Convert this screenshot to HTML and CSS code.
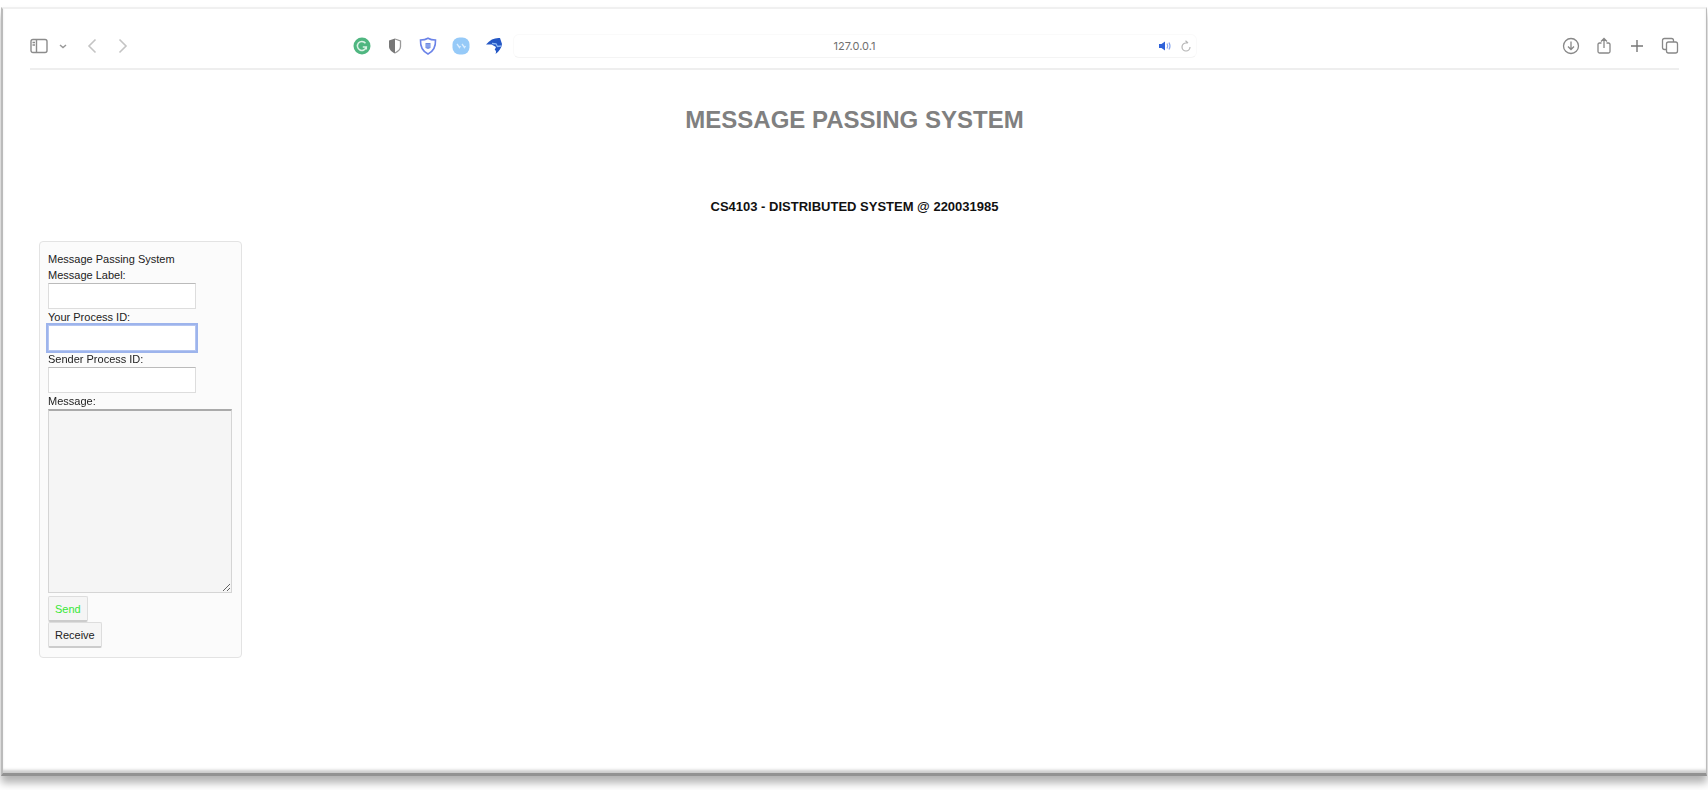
FILE: index.html
```html
<!DOCTYPE html>
<html lang="en">
<head>
    <meta charset="UTF-8">
    <meta name="viewport" content="width=device-width, initial-scale=1.0">
    <title>Message Passing System</title>
    <link rel="stylesheet" href="styles.css">
</head>
<body>
    <div class="window">
        <header class="toolbar">
            <div class="toolbar-left">
                <div class="tools nav-tools">
                    <button class="icon-btn" aria-label="Sidebar">
                        <svg width="18" height="18" viewBox="0 0 18 18" fill="none" stroke="#8c8c8c" stroke-width="1.4"><rect x="1" y="2.500" width="16" height="13" rx="2"/><path d="M6.500 2.500v13M2.500 5.500h2.500M2.500 8h2.500"/></svg>
                    </button>
                    <button class="icon-btn" aria-label="Tab groups">
                        <svg width="10" height="18" viewBox="0 0 10 18" fill="none" stroke="#999" stroke-width="1.500"><path d="M2 8l3 2.500L8 8"/></svg>
                    </button>
                    <button class="icon-btn back" aria-label="Back">
                        <svg width="12" height="18" viewBox="0 0 12 18" fill="none" stroke="#c4c4c4" stroke-width="1.600"><path d="M9.500 2.500L3 9l6.500 6.500"/></svg>
                    </button>
                    <button class="icon-btn forward" aria-label="Forward">
                        <svg width="12" height="18" viewBox="0 0 12 18" fill="none" stroke="#c4c4c4" stroke-width="1.600"><path d="M2.500 2.500L9 9l-6.500 6.500"/></svg>
                    </button>
                </div>
                <div class="tools extensions">
                    <button class="icon-btn" aria-label="Grammar">
                        <svg width="18" height="18" viewBox="0 0 18 18"><circle cx="9" cy="9" r="8.500" fill="#4fb680"/><path d="M12.500 6.200A4.500 4.500 0 1 0 13.300 10H9.800M13.300 9.500v3" fill="none" stroke="#d9f2e4" stroke-width="1.500"/></svg>
                    </button>
                    <button class="icon-btn" aria-label="Privacy">
                        <svg width="18" height="18" viewBox="0 0 18 18"><path d="M9 1.500L3 3.500v6c0 3.500 3 5.500 6 7z" fill="#777"/><path d="M9 2l5.500 2v5.500c0 3-2.500 5-5.500 6.500" fill="none" stroke="#999" stroke-width="1.300"/></svg>
                    </button>
                    <button class="icon-btn" aria-label="Shield">
                        <svg width="18" height="18" viewBox="0 0 18 18"><path d="M9 1.200c2.200 1.300 4.500 1.800 7.500 1.800.3 6-1.300 11-7.500 14C2.800 14 1.200 9 1.500 3 4.500 3 6.800 2.500 9 1.200z" fill="#fff" stroke="#6b83e8" stroke-width="1.600"/><path d="M6.500 6h5v5l-2.500 1-2.500-1z" fill="#6e8ce4"/><path d="M8 7v3.500M10 7v3.500" stroke="#b9c8f6" stroke-width=".7"/></svg>
                    </button>
                    <button class="icon-btn" aria-label="Quotes">
                        <svg width="18" height="18" viewBox="0 0 18 18"><rect x=".5" y=".5" width="17" height="17" rx="7" fill="#96caf8"/><path d="M5 7l2.500 3.500L8.500 9M10 7l2.500 3.500L13.500 9" fill="none" stroke="#d9edff" stroke-width="1.300"/></svg>
                    </button>
                    <button class="icon-btn" aria-label="Bird">
                        <svg width="18" height="18" viewBox="0 0 18 18"><path d="M1 7.500C5 2.500 10 .5 15 1L17 7c-.5 4-3 7.500-6.500 10 .8-2 .8-3.200-.8-4.300L11 10 6.500 7.500z" fill="#2457c5"/><path d="M7 6.500l4 .3 1.500 2.700 3.500-.5" fill="none" stroke="#8fbaf5" stroke-width="1.300"/></svg>
                    </button>
                </div>
            </div>
            <div class="address-bar">
                <input class="address" type="text" value="127.0.0.1" aria-label="Address">
                <button class="icon-btn" aria-label="Mute tab">
                    <svg width="14" height="12" viewBox="0 0 14 12"><path d="M1 4h2.500L7 1.500v9L3.500 8H1z" fill="#2e62d9"/><path d="M9 3.500q1.500 2.500 0 5M11 2.500q2 3.500 0 7" fill="none" stroke="#8ba8ee" stroke-width="1.200"/></svg>
                </button>
                <button class="icon-btn" aria-label="Reload">
                    <svg width="12" height="12" viewBox="0 0 12 12" fill="none" stroke="#b5b5b5" stroke-width="1.200"><path d="M7.500 3H6a4 4 0 1 0 4 4M5.500 .8L8 3"/></svg>
                </button>
            </div>
            <div class="tools page-tools">
                <button class="icon-btn" aria-label="Downloads">
                    <svg width="18" height="18" viewBox="0 0 18 18" fill="none" stroke="#888" stroke-width="1.300"><circle cx="9" cy="9" r="7.500"/><path d="M9 4.500v8M6 9.500l3 3 3-3"/></svg>
                </button>
                <button class="icon-btn" aria-label="Share">
                    <svg width="18" height="18" viewBox="0 0 18 18" fill="none" stroke="#888" stroke-width="1.300"><path d="M6.500 6H4.500Q3 6 3 7.500v7Q3 16 4.500 16h9q1.500 0 1.500-1.500v-7Q15 6 13.500 6h-2M9 11V1.500M6 4.500l3-3 3 3"/></svg>
                </button>
                <button class="icon-btn" aria-label="New tab">
                    <svg width="18" height="18" viewBox="0 0 18 18" fill="none" stroke="#777" stroke-width="1.400"><path d="M9 3v12M3 9h12"/></svg>
                </button>
                <button class="icon-btn" aria-label="Tab overview">
                    <svg width="18" height="18" viewBox="0 0 18 18" fill="none" stroke="#888" stroke-width="1.300"><rect x="5.500" y="5" width="11" height="11" rx="2"/><path d="M5.500 12.500H3.500Q1.500 12.500 1.500 10.500v-7q0-2 2-2h7q2 0 2 2V5"/></svg>
                </button>
            </div>
        </header>

        <main>
            <h1>MESSAGE PASSING SYSTEM</h1>
            <h2>CS4103 - DISTRIBUTED SYSTEM @ 220031985</h2>
            <form class="message-form">
                <div class="form-title">Message Passing System</div>
                <label for="label">Message Label:</label>
                <input type="text" class="form-control" id="label">
                <label for="process">Your Process ID:</label>
                <input type="text" class="form-control" id="process" autofocus>
                <label for="sender">Sender Process ID:</label>
                <input type="text" class="form-control" id="sender">
                <label for="message">Message:</label>
                <textarea class="message-box" id="message"></textarea>
                <button type="button" class="form-btn send-btn">Send</button>
                <button type="button" class="form-btn">Receive</button>
            </form>
        </main>
    </div>
</body>
</html>
```
FILE: styles.css
```css
* {
    box-sizing: border-box;
}
body {
    margin: 0;
    padding: 7px 1px 14px;
    min-height: 100vh;
    display: flex;
    background-color: #fff;
    font-family: "Liberation Sans", Arial, sans-serif;
}
.window {
    flex: 1;
    padding: 0 27px;
    background-color: #fff;
    border-top: 2px solid #f0f0f0;
    border-bottom: 3px solid #929292;
    border-left: 2px solid #bbb;
    border-right: 1px solid #bbb;
    box-shadow: 0 7px 8px rgba(0, 0, 0, 0.3), inset 0 -4px 3px -1px #ccc;
}
.toolbar {
    display: grid;
    grid-template-columns: 1fr 684px 1fr;
    align-items: center;
    height: 61px;
    padding-top: 14px;
    border-bottom: 2px solid #eee;
}
.toolbar-left {
    display: flex;
    justify-content: space-between;
}
.tools {
    display: flex;
    align-items: center;
}
.icon-btn {
    display: flex;
    padding: 0;
    border: none;
    background: none;
}
.nav-tools {
    gap: 10px;
}
.back {
    margin-left: 8px;
}
.forward {
    margin-left: 9px;
}
.extensions {
    gap: 15px;
    margin-right: 10px;
}
.page-tools {
    gap: 15px;
    justify-content: flex-end;
}
.address-bar {
    display: flex;
    align-items: center;
    gap: 8px;
    height: 24px;
    padding: 0 4px 0 46px;
    border: 1px solid #fafafa;
    border-bottom-color: #f4f4f4;
    border-radius: 6px;
}
.address {
    flex: 1;
    min-width: 0;
    padding: 0;
    border: none;
    outline: none;
    background: none;
    color: #707070;
    font-family: Inter, sans-serif;
    font-size: 11px;
    text-align: center;
}
main {
    padding: 0 9px;
}
h1 {
    margin: 36px 0 0;
    font-size: 24px;
    line-height: 28px;
    color: #808080;
    text-align: center;
}
h2 {
    margin: 65px 0 0;
    font-size: 13px;
    line-height: 16px;
    color: #111;
    text-align: center;
}
.message-form {
    display: flex;
    flex-direction: column;
    align-items: flex-start;
    width: 203px;
    margin-top: 26px;
    padding: 9px 9px 9px 8px;
    background-color: #fbfbfb;
    border: 1px solid #e3e3e3;
    border-radius: 4px;
    font-size: 11px;
    line-height: 16px;
    color: #222;
}
.form-control {
    width: 148px;
    height: 26px;
    padding: 4px;
    border: 1px solid #ddd;
    border-top-color: #bbb;
    background-color: #fff;
}
.form-control:focus {
    outline: 2px solid #9db4ec;
    border-color: #b4c5f1;
    caret-color: transparent;
}
.message-box {
    width: 100%;
    height: 184px;
    margin-bottom: 3px;
    border: 1px solid #d5d5d5;
    border-top: 2px solid #aaa;
    border-radius: 0;
    background-color: #f5f5f5;
}
.form-btn {
    height: 26px;
    padding: 0 6px;
    border: 1px solid #ddd;
    border-bottom: 2px solid #ccc;
    border-radius: 2px;
    background-color: #f5f5f5;
    color: #222;
    font-family: inherit;
    font-size: 11px;
}
.send-btn {
    color: #35e835;
}
```
